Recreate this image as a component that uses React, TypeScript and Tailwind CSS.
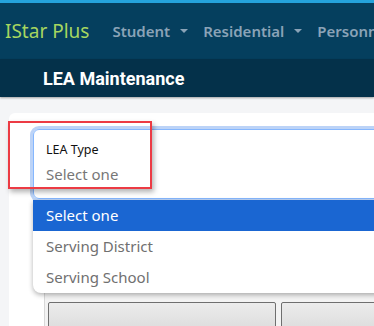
import React from "react";

const navItems = ["Student", "Residential", "Personnel"];
const options = ["Select one", "Serving District", "Serving School"];

function Caret() {
  return (
    <span className="ml-[10px] inline-block h-0 w-0 border-x-[4px] border-t-[4px] border-x-transparent border-t-[#8aa3b7]" />
  );
}

export default function App() {
  return (
    <div
      className="relative h-[326px] w-[374px] overflow-hidden bg-[#f4f5f7]"
      style={{ fontFamily: '"Noto Sans", "Open Sans", sans-serif' }}
    >
      {/* top nav */}
      <div className="h-[3px] bg-[#25a3dc]" />
      <div className="flex h-[56px] items-center whitespace-nowrap bg-[#053f5e]">
        <span className="ml-[5px] text-[19px] text-[#a6d660]">IStar Plus</span>
        <div className="ml-[23px] flex items-center gap-[15px]">
          {navItems.map((item) => (
            <span key={item} className="flex items-center text-[15px] font-semibold text-[#8aa3b7]">
              {item}
              {item !== "Personnel" && <Caret />}
            </span>
          ))}
        </div>
      </div>
      <div className="flex h-[38px] items-center bg-[#04314a] shadow-[0_1px_2px_rgba(0,0,0,0.35)]">
        <h1 className="ml-[43px] text-[18px] font-bold text-white" style={{ fontFamily: "Roboto, sans-serif" }}>
          LEA Maintenance
        </h1>
      </div>

      {/* content card */}
      <div className="ml-[9px] mt-[16px] h-[260px] w-[420px] rounded-tl-[6px] bg-white pl-[24px] pt-[16px]">
        <div className="relative">
          <div className="h-[70px] w-[390px] rounded-l-[6px] border border-[#86b7fe] pl-[12px] pt-[11px] shadow-[0_0_0_3px_#bcd3f7]">
            <div className="text-[12.5px] text-[#111]">LEA Type</div>
            <div className="mt-[3px] text-[15px] text-[#777]">Select one</div>
          </div>

          {/* open dropdown */}
          <ul className="absolute left-0 top-[71px] z-10 w-[390px] overflow-hidden rounded-bl-[8px] bg-white shadow-[0_2px_5px_rgba(0,0,0,0.3)]">
            {options.map((opt, i) => (
              <li
                key={opt}
                className={
                  i === 0
                    ? "flex h-[31px] items-center bg-[#1a66d2] pl-[13px] text-[15px] text-white"
                    : "flex h-[31px] items-center pl-[13px] text-[15px] text-[#707070]"
                }
              >
                {opt}
              </li>
            ))}
          </ul>

          {/* panel behind the dropdown */}
          <div className="ml-[11px] mt-[8px] h-[140px] border-l border-[#d8d8d8] bg-[#f3f3f3] pl-[3px] pt-[95px]">
            <div className="flex gap-[5px]">
              <div className="h-[30px] w-[228px] shrink-0 rounded-[2px] border border-[#6f6f6f] bg-gradient-to-b from-[#ececec] to-[#dcdcdc]" />
              <div className="h-[30px] w-[120px] shrink-0 rounded-[2px] border border-[#6f6f6f] bg-gradient-to-b from-[#ececec] to-[#dcdcdc]" />
            </div>
          </div>
        </div>
      </div>

      {/* red highlight annotation */}
      <div className="absolute left-[8px] top-[121px] z-20 h-[68px] w-[144px] border-2 border-[#ec3b44] shadow-[2px_3px_5px_rgba(0,0,0,0.3)]" />
    </div>
  );
}
